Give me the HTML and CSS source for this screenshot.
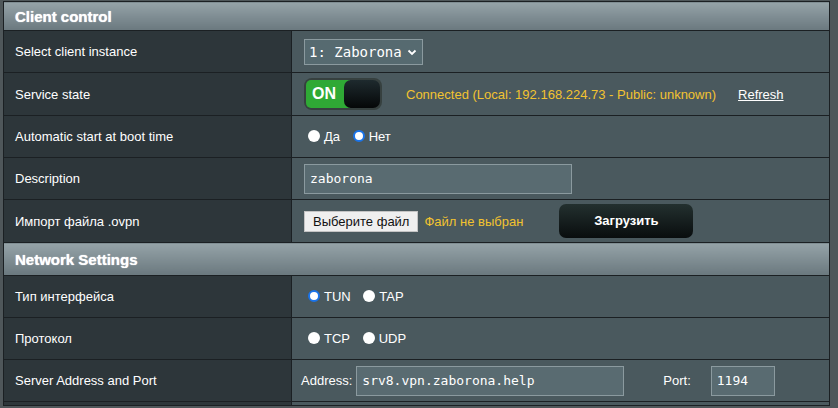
FILE: index.html
```html
<!DOCTYPE html>
<html lang="en">

<head>
    <meta charset="UTF-8">
    <meta name="viewport" content="width=device-width, initial-scale=1.0">
    <title>VPN Client</title>
    <link rel="stylesheet" href="styles.css">
</head>

<body>
    <main class="page">
        <table class="form-table">
            <tr class="section">
                <td colspan="2">Client control</td>
            </tr>
            <tr>
                <th>Select client instance</th>
                <td>
                    <div class="select">1: Zaborona
                        <svg width="10" height="8" viewBox="0 0 10 8"><path d="M1.5 2.5 L5 6 L8.5 2.5" fill="none" stroke="#fff" stroke-width="1.8"/></svg>
                    </div>
                </td>
            </tr>
            <tr class="tall">
                <th>Service state</th>
                <td>
                    <div class="state">
                        <div class="toggle"><span class="on">ON</span><span class="knob"></span></div>
                        <span class="status">Connected (Local: 192.168.224.73 - Public: unknown)</span>
                        <a href="javascript:;" class="refresh">Refresh</a>
                    </div>
                </td>
            </tr>
            <tr>
                <th>Automatic start at boot time</th>
                <td>
                    <label class="radio"><input type="radio" name="boot">Да</label>
                    <label class="radio"><input type="radio" name="boot" checked>Нет</label>
                </td>
            </tr>
            <tr>
                <th>Description</th>
                <td><input class="text-input" type="text" value="zaborona"></td>
            </tr>
            <tr class="tall">
                <th>Импорт файла .ovpn</th>
                <td>
                    <div class="upload">
                        <span class="file-btn">Выберите файл</span>
                        <span class="file-name">Файл не выбран</span>
                        <a href="javascript:;" class="button">Загрузить</a>
                    </div>
                </td>
            </tr>
            <tr class="section second">
                <td colspan="2">Network Settings</td>
            </tr>
            <tr>
                <th>Тип интерфейса</th>
                <td>
                    <label class="radio"><input type="radio" name="iface" checked>TUN</label>
                    <label class="radio"><input type="radio" name="iface">TAP</label>
                </td>
            </tr>
            <tr>
                <th>Протокол</th>
                <td>
                    <label class="radio"><input type="radio" name="proto">TCP</label>
                    <label class="radio"><input type="radio" name="proto">UDP</label>
                </td>
            </tr>
            <tr>
                <th>Server Address and Port</th>
                <td class="address">
                    <div class="addr-row">
                        <span>Address:</span>
                        <input class="text-input" type="text" value="srv8.vpn.zaborona.help">
                        <span class="port-label">Port:</span>
                        <input class="text-input port" type="text" value="1194">
                    </div>
                </td>
            </tr>
            <tr class="stub">
                <th></th>
                <td></td>
            </tr>
        </table>
    </main>
</body>

</html>
```

FILE: styles.css
```css
* {
    padding: 0;
    margin: 0;
    box-sizing: border-box;
}

body {
    background: #4f575a;
    font-family: "Liberation Sans", Arial, sans-serif;
    font-size: 13px;
    color: #fff;
    height: 408px;
    overflow: hidden;
}

.page {
    padding: 1px 0 0 3px;
    width: 830px;
}

.form-table {
    width: 827px;
    border-collapse: collapse;
    border: 1px solid #1b2023;
}

.form-table th,
.form-table td {
    border: 1px solid #1b2023;
    height: 42px;
    text-align: left;
    vertical-align: middle;
}

.form-table tr.tall th,
.form-table tr.tall td {
    height: 43px;
}

.form-table tr.stub th,
.form-table tr.stub td {
    height: 4px;
    border-bottom: none;
}

.form-table th {
    width: 288px;
    background: #2d363a;
    font-weight: normal;
    padding-left: 11px;
}

.form-table td {
    background: #4a595e;
    padding-left: 12px;
}

.form-table tr.section td {
    height: 29px;
    padding-left: 11px;
    background: linear-gradient(to bottom, #95a3a8 0%, #6a787e 100%);
    font-size: 15px;
    font-weight: bold;
    text-shadow: 0 0 1px #fff;
}

.form-table tr.section.second td {
    height: 33px;
}

.select {
    display: inline-flex;
    align-items: center;
    gap: 5px;
    height: 26px;
    padding: 0 5px 0 4px;
    background: #566a70;
    border: 1px solid #8b9a9f;
    font-family: "DejaVu Sans Mono", monospace;
    font-size: 14px;
}

.state {
    display: flex;
    align-items: center;
}

.toggle {
    display: flex;
    width: 78px;
    height: 32px;
    padding: 2px;
    border-radius: 8px;
    background: #36403f;
}

.toggle .on {
    width: 44px;
    margin-right: -6px;
    padding-left: 6px;
    background: #2fa935;
    border-radius: 5px 0 0 5px;
    font-weight: bold;
    font-size: 16px;
    line-height: 28px;
}

.toggle .knob {
    flex: 1;
    border-radius: 7px;
    background: linear-gradient(to bottom, #1e2a2e, #050708);
}

.status {
    margin-left: 24px;
    color: #f2c330;
}

.refresh {
    margin-left: 22px;
    color: #fff;
}

.radio {
    display: inline-flex;
    align-items: center;
    margin-right: 5px;
}

.radio input {
    appearance: none;
    width: 12px;
    height: 12px;
    margin: 0 4px 1px 4px;
    border-radius: 50%;
    background: #fff;
}

.radio input:checked {
    border: 2px solid #1a73e8;
}

.text-input {
    width: 268px;
    height: 30px;
    padding-left: 5px;
    background: #596b71;
    border: 1px solid #8b9a9f;
    color: #fff;
    font-family: "DejaVu Sans Mono", monospace;
    font-size: 13px;
    outline: none;
}

.upload {
    display: flex;
    align-items: center;
}

.file-btn {
    padding: 2px 8px;
    background: #efefef;
    border: 1px solid #c4c4c4;
    color: #111;
}

.file-name {
    margin-left: 6px;
    color: #f2c330;
}

.button {
    display: inline-block;
    width: 134px;
    height: 34px;
    margin-left: 36px;
    border-radius: 7px;
    background: linear-gradient(to bottom, #23302f, #090d0e);
    color: #fff;
    font-weight: bold;
    line-height: 34px;
    text-align: center;
    text-decoration: none;
}

.form-table td.address {
    padding-left: 9px;
}

.addr-row {
    display: flex;
    align-items: center;
}

.addr-row .text-input {
    margin-left: 4px;
}

.port-label {
    margin-left: 39px;
}

.addr-row .text-input.port {
    width: 64px;
    margin-left: 20px;
}
```
